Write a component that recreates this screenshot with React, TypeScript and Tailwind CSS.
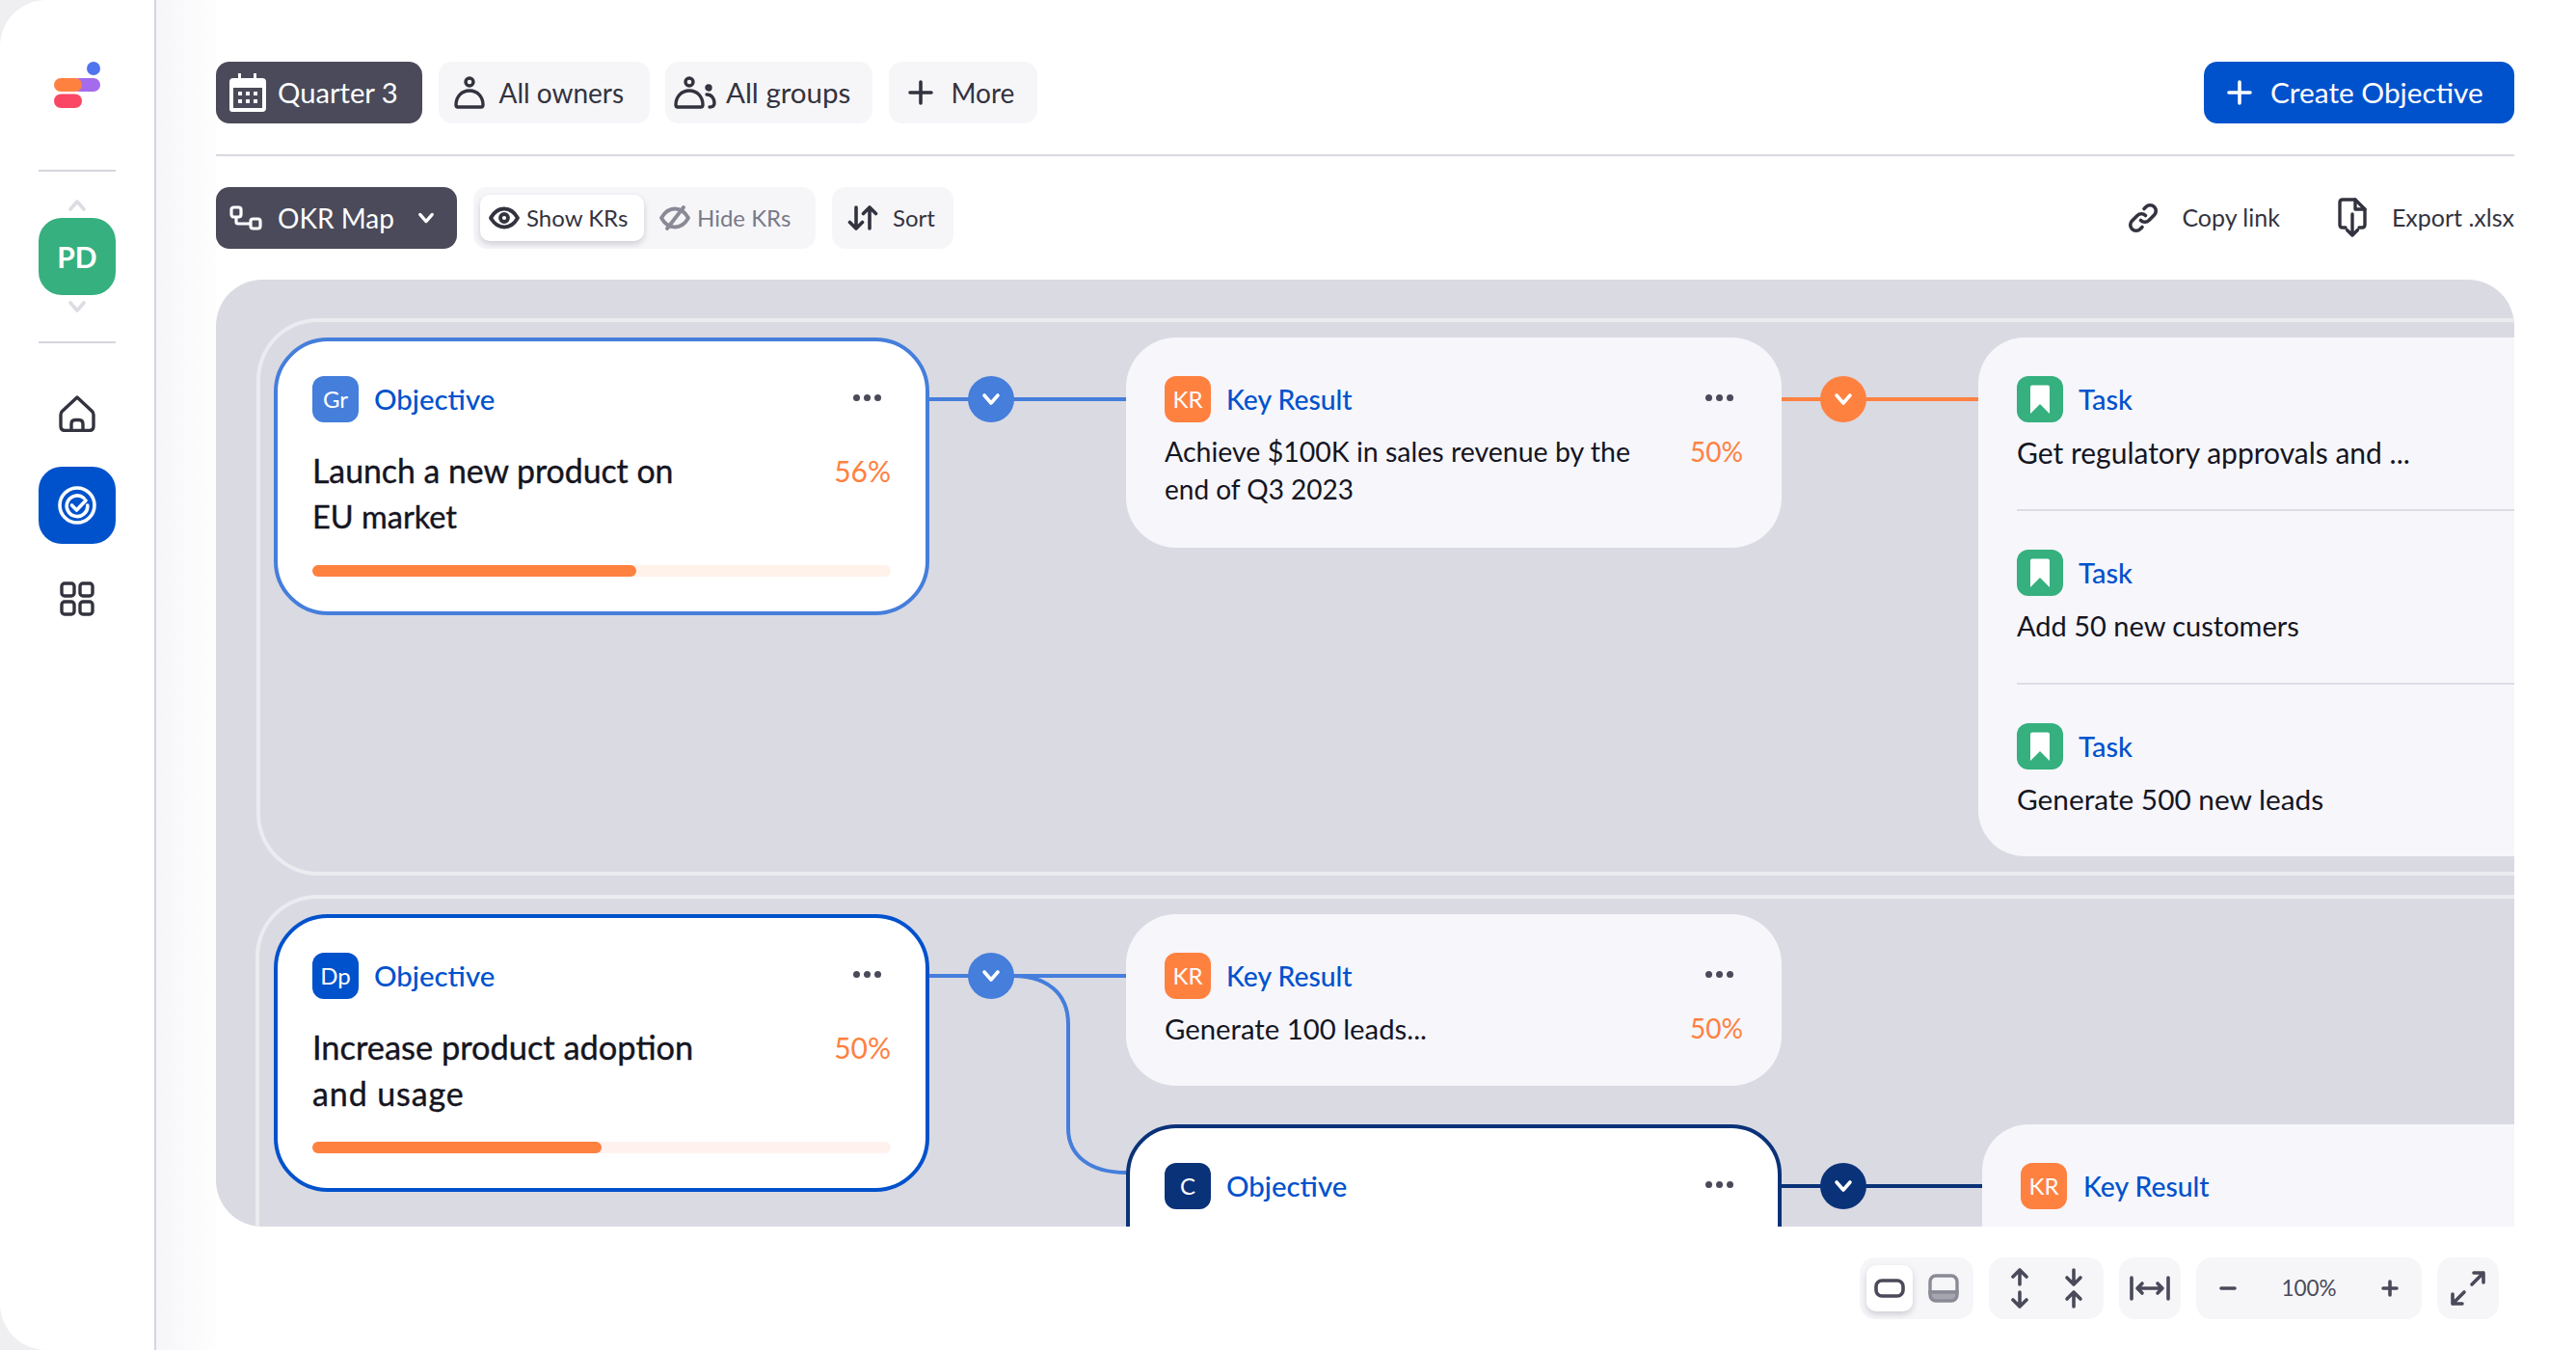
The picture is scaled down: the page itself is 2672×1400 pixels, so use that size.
import type { ReactNode } from "react"

const MEDIUM = "[-webkit-text-stroke:0.4px_currentColor]"

function Dots() {
  return (
    <div className="-mt-[3px] ml-auto mr-[10px] flex gap-[4px]">
      <span className="h-[7px] w-[7px] rounded-full bg-[#4a4a5a]" />
      <span className="h-[7px] w-[7px] rounded-full bg-[#4a4a5a]" />
      <span className="h-[7px] w-[7px] rounded-full bg-[#4a4a5a]" />
    </div>
  )
}

function Badge({ bg, children }: { bg: string; children: ReactNode }) {
  return (
    <div className={`flex h-[48px] w-[48px] items-center justify-center rounded-[12px] text-[24px] text-white ${bg}`}>
      {children}
    </div>
  )
}

function CardHead({ badge, bg, label }: { badge: ReactNode; bg: string; label: string }) {
  return (
    <div className="flex items-center">
      <Badge bg={bg}>{badge}</Badge>
      <span className={`ml-[16px] font-medium text-[#0052cc] ${label === "Key Result" ? "text-[28.3px]" : "text-[29.4px]"}`}>{label}</span>
      <Dots />
    </div>
  )
}

function Chevron({ className = "stroke-white" }: { className?: string }) {
  return (
    <svg width="20" height="14" viewBox="0 0 20 14" fill="none" className={className}>
      <path d="M3 3l7 8 7-8" strokeWidth="3.6" strokeLinecap="round" strokeLinejoin="round" />
    </svg>
  )
}

function Connector({ className, line, dot }: { className: string; line: string; dot: string }) {
  return (
    <div className={`absolute flex h-[48px] items-center ${className}`}>
      <div className={`h-[4px] w-full ${line}`} />
      <div className={`absolute left-[40px] top-0 flex h-[48px] w-[48px] items-center justify-center rounded-full ${dot}`}>
        <Chevron />
      </div>
    </div>
  )
}

function Objective({ className, border, badge, bg, title, pct, fill, track }: {
  className: string
  border: string
  badge: string
  bg: string
  title: ReactNode
  pct: string
  fill: string
  track: string
}) {
  return (
    <div className={`absolute w-[680px] overflow-hidden rounded-[56px] border-4 bg-white p-[36px] ${border} ${className}`}>
      <CardHead badge={badge} bg={bg} label="Objective" />
      <div className="mt-[26px] flex items-start justify-between leading-[48px] text-[#15151f]">
        <div className={MEDIUM}>{title}</div>
        <div className="text-[30px] text-[#ff8140]">{pct}</div>
      </div>
      <div className={`mt-[26px] h-[12px] rounded-full ${track}`}>
        <div className={`h-full rounded-full bg-[#ff8140] ${fill}`} />
      </div>
    </div>
  )
}

function KeyResult({ className, children, pct }: { className: string; children: ReactNode; pct: string }) {
  return (
    <div className={`absolute w-[680px] rounded-[52px] bg-[#f6f6fb] px-[40px] pt-[40px] ${className}`}>
      <CardHead badge="KR" bg="bg-[#ff8140]" label="Key Result" />
      <div className="mt-[11px] flex items-start justify-between text-[28px] leading-[39px] text-[#15151f]">
        <div>{children}</div>
        <div className="text-[#ff8140]">{pct}</div>
      </div>
    </div>
  )
}

function TaskBadge() {
  return (
    <svg width="48" height="48" viewBox="0 0 48 48">
      <rect width="48" height="48" rx="12" fill="#35b07e" />
      <path d="M16 9.5h16a2 2 0 0 1 2 2V39L24 29 14 39V11.5a2 2 0 0 1 2-2z" fill="#fff" />
    </svg>
  )
}

function TaskRow({ text, size }: { text: string; size: string }) {
  return (
    <div className="h-[180px] border-b-2 border-[#dcdce5] pt-[40px] last:border-b-0">
      <div className="flex items-center">
        <TaskBadge />
        <span className="ml-[16px] text-[29px] font-medium text-[#0052cc]">Task</span>
      </div>
      <div className={`mt-[11px] leading-[40px] text-[#15151f] ${size}`}>{text}</div>
    </div>
  )
}

function Chip({ className, children }: { className: string; children: ReactNode }) {
  return (
    <div className={`flex h-[64px] items-center rounded-[14px] text-[28px] ${className}`}>
      {children}
    </div>
  )
}

function Person({ size = 32 }: { size?: number }) {
  return (
    <svg width={size} height={size + 2} viewBox="0 0 32 34" fill="none" stroke="#33333f" strokeWidth="3.4" strokeLinejoin="round">
      <circle cx="16" cy="6" r="4" />
      <path d="M4 32h24c1.5 0 2-1 2-2.500C30 21 24 15 16 15S2 21 2 29.500C2 31 2.500 32 4 32z" />
    </svg>
  )
}

function Plus({ color = "#33333f" }: { color?: string }) {
  return (
    <svg width="26" height="26" viewBox="0 0 26 26" fill="none" stroke={color} strokeWidth="3.6" strokeLinecap="round">
      <path d="M13 2v22M2 13h22" />
    </svg>
  )
}

function Eye({ slash, color }: { slash?: boolean; color: string }) {
  return (
    <svg width="32" height="26" viewBox="0 0 32 26" fill="none" stroke={color} strokeWidth="3.8" strokeLinejoin="round" strokeLinecap="round">
      <path d="M2 13C6 6 11 3.500 16 3.500S26 6 30 13c-4 7-9 9.500-14 9.500S6 20 2 13z" />
      {slash ? <path d="M8 24L25 2" /> : <circle cx="16" cy="13" r="4" />}
    </svg>
  )
}

function Sidebar() {
  return (
    <aside className="flex w-[162px] shrink-0 flex-col items-center border-r-2 border-[#d6d6df]">
      {/* logo */}
      <svg width="48" height="48" viewBox="0 0 48 48" className="mt-[64px]">
        <circle cx="41" cy="7" r="7" fill="#4f74ee" />
        <rect x="19" y="17" width="29" height="14" rx="7" fill="#a46cec" />
        <rect x="0" y="17" width="29" height="14" rx="7" fill="#ff8140" />
        <rect x="0" y="33.500" width="29" height="14.500" rx="7.250" fill="#fb4764" />
      </svg>
      <div className="mt-[64px] h-[2px] w-[80px] bg-[#d6d6df]" />
      <Chevron className="mt-[28px] rotate-180 stroke-[#dcdce3]" />
      <div className="mt-[6px] flex h-[80px] w-[80px] items-center justify-center rounded-[24px] bg-[#35b07e] text-[30px] font-bold text-white">
        PD
      </div>
      <Chevron className="mt-[5px] stroke-[#dcdce3]" />
      <div className="mt-[29px] h-[2px] w-[80px] bg-[#d6d6df]" />
      <svg width="38" height="38" viewBox="0 0 38 38" fill="none" stroke="#33333f" strokeWidth="3.4" strokeLinejoin="round" className="mt-[54px]">
        <path d="M19 2L3.500 16.500c-1 1-1.500 2-1.500 3.500v12c0 3 1.500 4.500 4.500 4.500h25c3 0 4.500-1.500 4.500-4.500V20c0-1.500-.5-2.500-1.500-3.500z" />
        <path d="M13 36v-6c0-3 1.500-4.500 4-4.500h4c2.500 0 4 1.500 4 4.500v6" />
      </svg>
      <div className="mt-[36px] flex h-[80px] w-[80px] items-center justify-center rounded-[24px] bg-[#0052cc]">
        <svg width="40" height="40" viewBox="0 0 40 40" fill="none" stroke="#fff" strokeWidth="3.6" strokeLinecap="round" strokeLinejoin="round">
          <circle cx="20" cy="20" r="18" />
          <path d="M27 12.500A10.800 10.800 0 1 0 30.800 20" />
          <path d="M14.500 20l5 5L29 15" />
        </svg>
      </div>
      <svg width="36" height="36" viewBox="0 0 36 36" fill="none" stroke="#33333f" strokeWidth="3.4" className="mt-[39px]">
        <rect x="2" y="2" width="13" height="13" rx="3" />
        <rect x="21" y="2" width="13" height="13" rx="3" />
        <rect x="2" y="21" width="13" height="13" rx="3" />
        <rect x="21" y="21" width="13" height="13" rx="3" />
      </svg>
    </aside>
  )
}

function TopBar() {
  return (
    <div className="flex items-center gap-[16.500px]">
      <Chip className="w-[214px] bg-[#4a4a5a] pl-[14px] text-white">
        <svg width="38" height="40" viewBox="0 0 38 40" className="shrink-0">
          <path d="M9 0h3v5h13V0h3v5h6a4 4 0 0 1 4 4v27a4 4 0 0 1-4 4H3a3 3 0 0 1-3-3V9a4 4 0 0 1 4-4h5z" fill="#fff" />
          <rect x="4" y="15" width="30" height="21" fill="#4a4a5a" />
          <g fill="#fff">
            <rect x="9" y="19" width="4" height="4" />
            <rect x="17" y="19" width="4" height="4" />
            <rect x="25" y="19" width="4" height="4" />
            <rect x="9" y="27" width="4" height="4" />
            <rect x="17" y="27" width="4" height="4" />
            <rect x="25" y="27" width="4" height="4" />
          </g>
        </svg>
        <span className="ml-[12px] text-[29.2px]">Quarter 3</span>
      </Chip>
      <Chip className="w-[219px] bg-[#f6f6f9] pl-[16px] text-[#33333f]">
        <Person />
        <span className="ml-[15px]">All owners</span>
      </Chip>
      <Chip className="w-[215px] bg-[#f6f6f9] pl-[9px] text-[#33333f]">
        <Person />
        <svg width="14" height="34" viewBox="0 0 14 34" fill="none" stroke="#33333f" strokeWidth="3.4" strokeLinecap="round" className="-ml-[1px]">
          <circle cx="5" cy="12" r="2" />
          <path d="M3 19c5 0 8 4 8 9 0 3-2 4-5 4" />
        </svg>
        <span className="ml-[9px] text-[29.5px]">All groups</span>
      </Chip>
      <Chip className="w-[154px] bg-[#f6f6f9] pl-[20px] text-[#33333f]">
        <Plus />
        <span className="ml-[19px]">More</span>
      </Chip>
      <Chip className="ml-auto w-[322px] bg-[#0052cc] pl-[24px] text-white">
        <Plus color="#ffffff" />
        <span className="ml-[19px] text-[29.8px]">Create Objective</span>
      </Chip>
    </div>
  )
}

function SecondBar() {
  return (
    <div className="mt-[32px] flex items-center">
      <Chip className="w-[250px] bg-[#4a4a5a] pl-[14px] text-white">
        <svg width="34" height="26" viewBox="0 0 34 26" fill="none" stroke="#fff" strokeWidth="3.2" strokeLinejoin="round">
          <rect x="2" y="2" width="10" height="10" rx="2.500" />
          <rect x="22" y="14" width="10" height="10" rx="2.500" />
          <path d="M7 12v5c0 1.500 1 2 2 2h13" />
        </svg>
        <span className="ml-[16px]">OKR Map</span>
        <Chevron className="ml-[23px] scale-90 stroke-white" />
      </Chip>
      <div className="ml-[17px] flex h-[64px] w-[355px] items-center rounded-[14px] bg-[#f6f6f9] pl-[7px] text-[24px]">
        <div className="flex h-[48px] w-[170px] items-center rounded-[10px] bg-white pl-[9px] text-[#33333f] shadow-[0_3px_6px_rgba(60,60,80,0.22)]">
          <Eye color="#33333f" />
          <span className="ml-[7px]">Show KRs</span>
        </div>
        <div className="ml-[16px] flex items-center text-[#7a7a88]">
          <Eye slash color="#8a8a96" />
          <span className="ml-[7px]">Hide KRs</span>
        </div>
      </div>
      <div className="ml-[17px] flex h-[64px] w-[126px] items-center rounded-[14px] bg-[#f6f6f9] pl-[16px] text-[24px] text-[#33333f]">
        <svg width="32" height="28" viewBox="0 0 32 28" fill="none" stroke="#33333f" strokeWidth="3.6" strokeLinecap="round" strokeLinejoin="round">
          <path d="M9 3v22M2.500 18.500L9 25l6.500-6.500M23 25V3M16.500 9.500L23 3l6.500 6.500" />
        </svg>
        <span className="ml-[15px]">Sort</span>
      </div>
      <div className="ml-auto flex items-center text-[25px] text-[#33333f]">
        <svg width="32" height="32" viewBox="0 0 32 32" fill="none" stroke="#33333f" strokeWidth="3.600" strokeLinecap="round">
          <path d="M13.500 18.500a6 6 0 0 0 8.500 0l5.500-5.500a6 6 0 0 0-8.500-8.500l-2 2" />
          <path d="M18.500 13.500a6 6 0 0 0-8.500 0L4.500 19a6 6 0 0 0 8.500 8.500l2-2" />
        </svg>
        <span className="ml-[24px]">Copy link</span>
        <svg width="30" height="42" viewBox="0 0 30 42" fill="none" stroke="#33333f" strokeWidth="3.400" strokeLinecap="round" strokeLinejoin="round" className="ml-[60px]">
          <path d="M8 31H5c-1.500 0-3-1-3-3V5c0-2 1.500-3 3-3h13l10 10v16c0 2-1.500 3-3 3h-3" />
          <path d="M18 2v10h10" />
          <path d="M15 17v22M9.500 33.500L15 39l5.500-5.500" />
        </svg>
        <span className="ml-[26px]">Export .xlsx</span>
      </div>
    </div>
  )
}

function MapCanvas() {
  return (
    <div className="relative mt-[32px] h-[982px] overflow-hidden rounded-t-[48px] rounded-bl-[48px] bg-[#dadae3]">
      {/* group outlines */}
      <div className="absolute left-[42px] top-[40px] h-[578px] w-[2400px] rounded-l-[64px] border-y-4 border-l-4 border-[#ebebf0]" />
      <div className="absolute left-[41px] top-[638px] h-[400px] w-[2400px] rounded-tl-[64px] border-l-4 border-t-4 border-[#ebebf0]" />

      {/* connectors */}
      <Connector className="left-[740px] top-[100px] w-[204px]" line="bg-[#457edb]" dot="bg-[#457edb]" />
      <Connector className="left-[1624px] top-[100px] w-[204px]" line="bg-[#ff8140]" dot="bg-[#ff8140]" />
      <Connector className="left-[740px] top-[698px] w-[204px]" line="bg-[#457edb]" dot="bg-[#457edb]" />
      <Connector className="left-[1624px] top-[916px] w-[208px]" line="bg-[#0a3278]" dot="bg-[#0a3278]" />
      <svg width="140" height="230" viewBox="0 0 140 230" fill="none" className="absolute left-[820px] top-[710px]">
        <path d="M6 12C42 12 64 30 64 62V170C64 198 86 216 124 216" stroke="#457edb" strokeWidth="4" />
      </svg>

      <Objective
        className="left-[60px] top-[60px] h-[288px]"
        border="border-[#457edb]"
        badge="Gr"
        bg="bg-[#457edb]"
        title={
          <>
            <div className="text-[33.8px]">Launch a new product on</div>
            <div className="text-[32.5px]">EU market</div>
          </>
        }
        pct="56%"
        fill="w-[56%]"
        track="bg-[#fff2ea]"
      />
      <KeyResult className="left-[944px] top-[60px] h-[218px]" pct="50%">
        <div className="text-[28.5px]">Achieve $100K in sales revenue by the</div>
        <div>end of Q3 2023</div>
      </KeyResult>
      <div className="absolute left-[1828px] top-[60px] h-[538px] w-[600px] rounded-l-[48px] bg-[#f6f6fb] pl-[40px]">
        <TaskRow text="Get regulatory approvals and ..." size="text-[30px]" />
        <TaskRow text="Add 50 new customers" size="text-[29px]" />
        <TaskRow text="Generate 500 new leads" size="text-[29.8px]" />
      </div>

      <Objective
        className="left-[60px] top-[658px] h-[288px]"
        border="border-[#0052cc]"
        badge="Dp"
        bg="bg-[#0052cc]"
        title={
          <>
            <div className="text-[34.4px]">Increase product adoption</div>
            <div className="text-[34px] tracking-[0.9px]">and usage</div>
          </>
        }
        pct="50%"
        fill="w-[50%]"
        track="bg-[#fff2ee]"
      />
      <KeyResult className="left-[944px] top-[658px] h-[178px]" pct="50%">
        <span className="text-[29.3px]">Generate 100 leads...</span>
      </KeyResult>
      <div className="absolute left-[944px] top-[876px] h-[288px] w-[680px] rounded-[52px] border-4 border-[#0a3278] bg-white p-[36px]">
        <CardHead badge="C" bg="bg-[#0a3278]" label="Objective" />
      </div>
      <div className="absolute left-[1832px] top-[876px] h-[200px] w-[600px] rounded-l-[48px] bg-[#f6f6fb] pl-[40px] pt-[40px]">
        <div className="flex items-center">
          <Badge bg="bg-[#ff8140]">KR</Badge>
          <span className="ml-[17px] text-[28.3px] font-medium text-[#0052cc]">Key Result</span>
        </div>
      </div>
    </div>
  )
}

function ToolBox({ className, children }: { className: string; children: ReactNode }) {
  return <div className={`flex h-[64px] items-center rounded-[16px] bg-[#f6f6f9] ${className}`}>{children}</div>
}

function ZoomBar() {
  const arrow = { fill: "none", stroke: "#4a4a5a", strokeWidth: 3.6, strokeLinecap: "round", strokeLinejoin: "round" } as const
  return (
    <div className="mr-[16px] mt-[32px] flex justify-end gap-[16px]">
      <ToolBox className="w-[118px] pl-[7px]">
        <div className="flex h-[48px] w-[48px] items-center justify-center rounded-[10px] bg-white shadow-[0_3px_6px_rgba(60,60,80,0.22)]">
          <svg width="32" height="20" viewBox="0 0 32 20" fill="none" stroke="#4a4a5a" strokeWidth="3.6">
            <rect x="2" y="2" width="28" height="16" rx="6" />
          </svg>
        </div>
        <svg width="34" height="30" viewBox="0 0 34 30" className="ml-[15px]" fill="none" stroke="#8a8a96" strokeWidth="3.4">
          <path d="M3 8a6 6 0 0 1 6-6h16a6 6 0 0 1 6 6v11H3z" />
          <path d="M3 19h28v3a6 6 0 0 1-6 6H9a6 6 0 0 1-6-6z" fill="#a6a6b0" />
        </svg>
      </ToolBox>
      <ToolBox className="w-[119px] justify-center gap-[32px]">
        <svg width="24" height="42" viewBox="0 0 24 42" {...arrow}>
          <path d="M12 2v15M5 9l7-7 7 7M12 25v15M5 33l7 7 7-7" />
        </svg>
        <svg width="24" height="42" viewBox="0 0 24 42" {...arrow}>
          <path d="M12 2v15M5 10l7 7 7-7M12 25v15M5 32l7-7 7 7" />
        </svg>
      </ToolBox>
      <ToolBox className="w-[64px] justify-center">
        <svg width="42" height="26" viewBox="0 0 42 26" {...arrow}>
          <path d="M2 2v22M40 2v22M8 13h26M13 8l-5 5 5 5M29 8l5 5-5 5" />
        </svg>
      </ToolBox>
      <ToolBox className="w-[234px] justify-between px-[24px] text-[22.5px] text-[#4a4a5a]">
        <svg width="18" height="4" viewBox="0 0 18 4" {...arrow}>
          <path d="M2 2h14" />
        </svg>
        <span>100%</span>
        <svg width="18" height="18" viewBox="0 0 18 18" {...arrow}>
          <path d="M2 9h14M9 2v14" />
        </svg>
      </ToolBox>
      <ToolBox className="w-[64px] justify-center">
        <svg width="38" height="38" viewBox="0 0 38 38" {...arrow}>
          <path d="M23 15L35 3M25 3h10v10M15 23L3 35M13 35H3V25" />
        </svg>
      </ToolBox>
    </div>
  )
}

export default function App() {
  return (
    <div className="h-[1400px] w-[2672px] overflow-hidden bg-[#efeff1] [font-family:Lato,sans-serif]">
      <div className="flex h-full rounded-[48px] bg-white">
        <Sidebar />
        <main className="flex-1 bg-[linear-gradient(90deg,#f6f6f9,#ffffff_70px)] pl-[62px] pr-[64px] pt-[64px]">
          <TopBar />
          <div className="mt-[32px] h-[2px] bg-[#d9d9e2]" />
          <SecondBar />
          <MapCanvas />
          <ZoomBar />
        </main>
      </div>
    </div>
  )
}
